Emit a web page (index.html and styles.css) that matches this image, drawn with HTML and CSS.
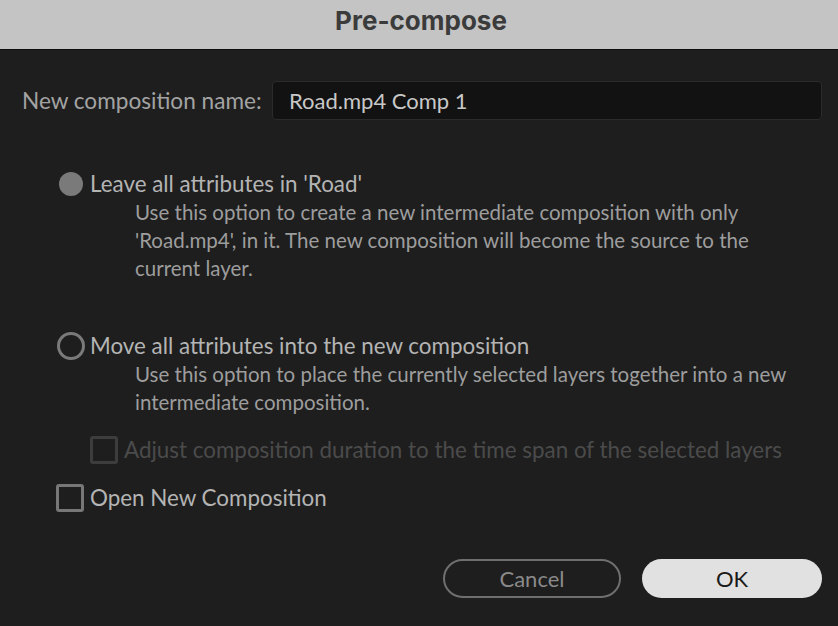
FILE: index.html
```html
<!DOCTYPE html>
<html>
<head>
<meta charset="utf-8">
<link rel="stylesheet" href="styles.css">
</head>
<body>
<div class="dialog">
  <div class="titlebar">Pre-compose</div>
  <div class="content">
    <div class="name-row">
      <span class="name-label">New composition name:</span>
      <div class="name-input">Road.mp4 Comp 1</div>
    </div>

    <div class="options">
      <div class="option first">
        <div class="row">
          <span class="radio filled"></span>
          <span class="label">Leave all attributes in 'Road'</span>
        </div>
        <div class="desc">Use this option to create a new intermediate composition with only<br>'Road.mp4', in it. The new composition will become the source to the<br>current layer.</div>
      </div>

      <div class="option second">
        <div class="row">
          <span class="radio"></span>
          <span class="label">Move all attributes into the new composition</span>
        </div>
        <div class="desc">Use this option to place the currently selected layers together into a new<br>intermediate composition.</div>
      </div>

      <div class="row sub disabled">
        <span class="check"></span>
        <span class="label">Adjust composition duration to the time span of the selected layers</span>
      </div>

      <div class="row open">
        <span class="check"></span>
        <span class="label">Open New Composition</span>
      </div>
    </div>

    <div class="buttons">
      <div class="btn cancel">Cancel</div>
      <div class="btn ok">OK</div>
    </div>
  </div>
</div>
</body>
</html>
```
FILE: styles.css
```css
html, body {
  margin: 0;
  padding: 0;
  background: #1e1e1e;
}
body {
  width: 838px;
  height: 626px;
  overflow: hidden;
  font-family: Lato, "Open Sans", sans-serif;
  font-size: 22px;
}
.titlebar {
  height: 49px;
  background: #c4c4c4;
  border-bottom: 1px solid #0c0c0c;
  color: #3b3b3b;
  font-family: Inter, sans-serif;
  font-weight: 700;
  font-size: 26px;
  line-height: 42px;
  text-align: center;
  padding-left: 4px;
}
.content {
  padding: 31px 16px 0 22px;
}
.name-row {
  display: flex;
  align-items: center;
}
.name-label {
  width: 250px;
  color: #a3a3a3;
  font-size: 22.6px;
}
.name-input {
  flex: 1;
  box-sizing: border-box;
  height: 39px;
  background: #121212;
  border: 1px solid #2b2b2b;
  border-radius: 4px;
  color: #c8c8c8;
  padding-left: 16px;
  line-height: 37px;
  font-size: 22px;
}
.options {
  margin-left: 34px;
  margin-top: 50px;
}
.row {
  display: flex;
  align-items: center;
  height: 28px;
  line-height: 28px;
}
.label {
  color: #b4b4b4;
  margin-left: 5px;
  font-size: 22.4px;
}
.radio {
  width: 28px;
  height: 28px;
  box-sizing: border-box;
  border-radius: 50%;
  border: 3px solid #7a7a7a;
  flex: none;
  margin-left: 1px;
}
.radio.filled {
  background: #7a7a7a;
  width: 24px;
  height: 24px;
  margin-left: 3px;
  border: none;
}
.radio.filled + .label {
  margin-left: 7px;
}
.desc {
  margin-left: 79px;
  color: #9d9d9d;
  line-height: 28px;
  font-size: 20.5px;
}
.second {
  margin-top: 50px;
}
.check {
  width: 28px;
  height: 28px;
  box-sizing: border-box;
  border: 3px solid #777;
  border-radius: 3px;
  flex: none;
}
.sub {
  margin-top: 20px;
  margin-left: 34px;
}
.sub .check {
  border-color: #3d3d3d;
}
.sub .label {
  color: #4b4b4b;
  margin-left: 6px;
}
.open {
  margin-top: 20px;
}
.open .label {
  margin-left: 6px;
}
.buttons {
  display: flex;
  justify-content: flex-end;
  gap: 21px;
  margin-top: 47px;
}
.btn {
  height: 39px;
  box-sizing: border-box;
  border-radius: 20px;
  text-align: center;
  font-size: 22px;
}
.cancel {
  width: 178px;
  border: 2px solid #6f6f6f;
  color: #8a8a8a;
  line-height: 35px;
}
.ok {
  width: 180px;
  background: #e1e1e1;
  color: #1a1a1a;
  line-height: 39px;
}
```
